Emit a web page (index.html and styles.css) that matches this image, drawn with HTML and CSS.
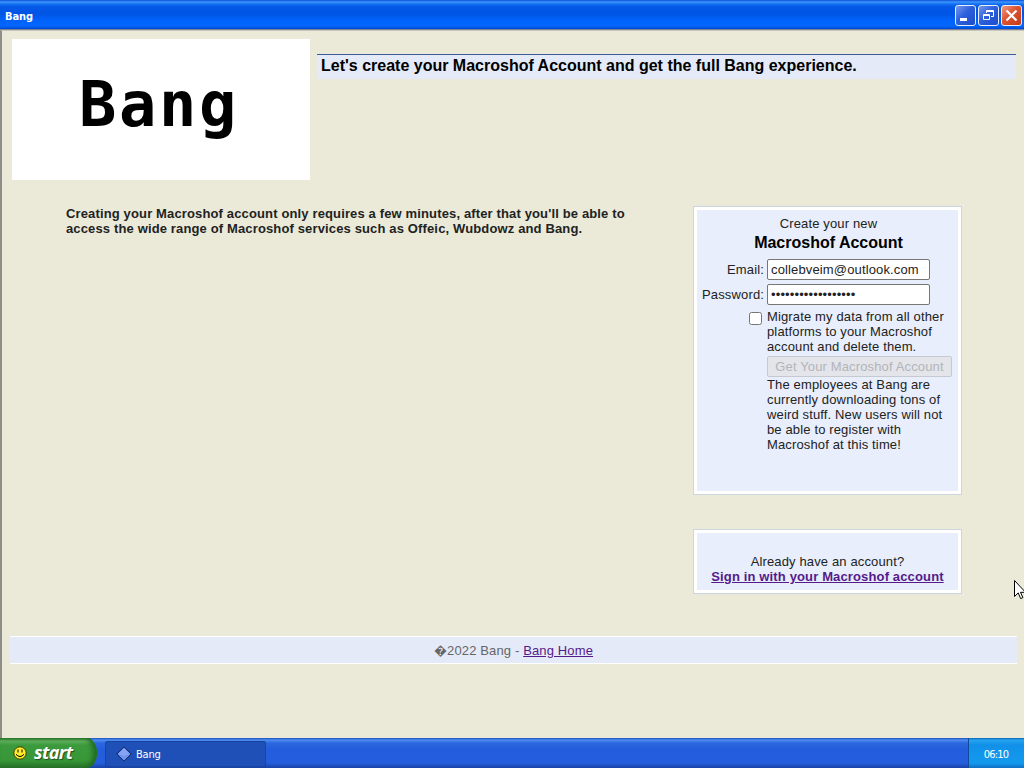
FILE: index.html
```
<!DOCTYPE html>
<html lang="en">
<head>
  <meta charset="UTF-8">
  <title>Bang</title>
  <link rel="stylesheet" href="styles.css">
</head>
<body>

<div class="titlebar">
  <span class="title">Bang</span>
  <div class="controls">
    <button class="control" aria-label="Minimize">
      <svg width="19" height="19" viewBox="0 0 19 19"><rect x="4" y="12" width="7" height="3" fill="#fff"/></svg>
    </button>
    <button class="control" aria-label="Restore">
      <svg width="19" height="19" viewBox="0 0 19 19" fill="none" stroke="#fff"><path d="M7.5 7V4.5h7v6H12M7 5.5h8"/><path d="M4.5 8.5h6v5h-6zM4 9.5h7"/></svg>
    </button>
    <button class="control close" aria-label="Close">
      <svg width="19" height="19" viewBox="0 0 19 19"><path d="M4.5 4.5l10 10M14.5 4.5l-10 10" stroke="#fff" stroke-width="2.2"/></svg>
    </button>
  </div>
</div>

<div class="page">
  <div class="top">
    <div class="logo">Bang</div>
    <h1>Let's create your Macroshof Account and get the full Bang experience.</h1>
  </div>

  <div class="main">
    <p class="intro">Creating your Macroshof account only requires a few minutes, after that you'll be able to<br>access the wide range of Macroshof services such as Offeic, Wubdowz and Bang.</p>

    <div class="side">
      <form class="box signup">
        <div class="box-title">Create your new<strong>Macroshof Account</strong></div>
        <div class="fields">
          <label for="email">Email:</label>
          <input type="text" id="email" value="collebveim@outlook.com">
          <label for="password">Password:</label>
          <input type="password" id="password" value="macroshofaccount22">
          <input type="checkbox" id="migrate">
          <label class="migrate" for="migrate">Migrate my data from all other platforms to your Macroshof account and delete them.</label>
          <div class="submit">
            <button type="button" disabled>Get Your Macroshof Account</button>
            <p>The employees at Bang are currently downloading tons of weird stuff. New users will not be able to register with Macroshof at this time!</p>
          </div>
        </div>
      </form>

      <div class="box signin">
        Already have an account?<br>
        <a href="#">Sign in with your Macroshof account</a>
      </div>
    </div>
  </div>

  <div class="footer">&#xFFFD;2022 Bang - <a href="#">Bang Home</a></div>
</div>

<div class="taskbar">
  <button class="start">
    <svg width="14" height="14" viewBox="0 0 14 14"><circle cx="7" cy="7" r="6.2" fill="#ffed2b" stroke="#3b3a00"/><path d="M4.5 3.5h1v3h-1zM8.5 3.5h1v3h-1z"/><path d="M3 8.3q4 4.5 8 0" fill="none" stroke="#000"/></svg>
    <span>start</span>
  </button>
  <div class="task">
    <svg width="16" height="16" viewBox="0 0 16 16"><path d="M8 .8L15.2 8 8 15.2.8 8z" fill="#7094ef" stroke="#0b2057"/><path d="M8 2.5L13.5 8 8 10 2.5 8z" fill="#92aff7" opacity=".6"/></svg>
    <span>Bang</span>
  </div>
  <div class="clock">06:10</div>
</div>

<svg class="cursor" width="12" height="21" viewBox="0 0 12 21"><path d="M.5.5v16l3.7-3.6 2.5 5.7 2.2-1-2.4-5.3h5z" fill="#fff" stroke="#000"/></svg>

</body>
</html>
```
FILE: styles.css
```
* {
  box-sizing: border-box;
}

body {
  margin: 0;
  width: 1024px;
  height: 768px;
  display: flex;
  flex-direction: column;
  overflow: hidden;
  font: 13px/15px "Liberation Sans", Arial, sans-serif;
  letter-spacing: 0.14px;
  color: #222;
  background: #ebead9;
}

p, h1 {
  margin: 0;
}

button, input {
  font: inherit;
  letter-spacing: inherit;
  margin: 0;
}

a {
  color: #551a8b;
}

/* window frame */
.titlebar {
  height: 30px;
  padding: 1px 2px 0 5px;
  display: flex;
  align-items: center;
  justify-content: space-between;
  background: linear-gradient(#0a50d8 0, #3f96fc 2px, #1470f2 4px, #0358e8 7px, #0055e5 14px, #0062fb 20px, #0066ff 26px, #0049cf 29px, #7b8299 29px);
}

.title {
  padding-top: 1px;
  font: bold 11px "DejaVu Sans Condensed", "DejaVu Sans", sans-serif;
  letter-spacing: -0.1px;
  color: #fff;
}

.controls {
  display: flex;
  gap: 2px;
}

.control {
  width: 21px;
  height: 21px;
  padding: 0;
  border: 1px solid #e8effc;
  border-radius: 3px;
  background: linear-gradient(135deg, #7799ee, #2c60dc 45%, #1e4cc8);
}

.control svg {
  display: block;
}

.close {
  background: linear-gradient(135deg, #ee9a83, #dc5331 45%, #c63a18);
}

.page {
  height: 708px;
  padding: 8px 7px 0 8px;
  border-left: 2px solid #8e8d89;
  border-top: 1px solid #c9c7bb;
}

.top {
  height: 167px;
  padding: 0 1px 0 2px;
  display: flex;
  gap: 7px;
}

.logo {
  width: 298px;
  height: 141px;
  padding-left: 67px;
  background: #fff;
  color: #000;
  font: bold 62px/131px "DejaVu Sans Mono", monospace;
  letter-spacing: 2.7px;
}

h1 {
  flex: 1;
  height: 25px;
  margin-top: 15px;
  padding-left: 4px;
  border-top: 1px solid #3c5c9c;
  background: #e5eaf8;
  color: #000;
  font-size: 16px;
  line-height: 22px;
  letter-spacing: 0;
}

.main {
  height: 430px;
  padding: 0 55px 0 56px;
  display: flex;
  justify-content: space-between;
}

.intro {
  font-weight: bold;
}

.side {
  width: 269px;
  display: flex;
  flex-direction: column;
  gap: 34px;
}

/* panels */
.box {
  border: 1px solid #ccd4e4;
  background: #e8eefb;
  box-shadow: inset 0 0 0 3px #fff;
}

.signup {
  height: 289px;
  padding: 9px 8px 0;
}

.box-title {
  height: 43px;
  padding-left: 2px;
  text-align: center;
}

.box-title strong {
  display: block;
  color: #000;
  font-size: 16px;
  line-height: 23px;
  letter-spacing: 0;
}

.fields {
  display: grid;
  grid-template-columns: 62px 186px;
  column-gap: 3px;
  justify-items: end;
}

.fields label {
  line-height: 21px;
}

.fields input[type="text"],
.fields input[type="password"] {
  justify-self: start;
  width: 163px;
  height: 21px;
  margin-bottom: 4px;
  padding: 1px 3px;
  border: 1px solid #767676;
  border-radius: 2px;
  background: #fff;
  color: #222;
}

.fields input[type="checkbox"] {
  width: 13px;
  height: 13px;
  margin: 3px 2px 0 0;
}

.fields .migrate {
  width: 186px;
  line-height: 15px;
}

.submit {
  grid-column: 2;
  width: 186px;
}

.submit button {
  width: 185px;
  height: 21px;
  margin-top: 2px;
  padding: 0;
  border: 1px solid #c6c9d0;
  border-radius: 2px;
  background: #e3e5ea;
  color: #b2b4b9;
}

.signin {
  height: 65px;
  padding-top: 24px;
  text-align: center;
}

.signin a {
  font-weight: bold;
}

.footer {
  height: 28px;
  border: 1px solid #fff;
  border-width: 1px 0;
  background: #e5eaf8;
  color: #666;
  line-height: 27px;
  text-align: center;
}

.taskbar {
  height: 30px;
  display: flex;
  background: linear-gradient(#2050b8 0, #4b8cf2 2px, #2c68de 5px, #235cdc 12px, #245edd 25px, #1941a5);
  color: #fff;
  font: 11px "DejaVu Sans Condensed", "DejaVu Sans", sans-serif;
}

.start {
  width: 97px;
  padding: 0 0 0 13px;
  display: flex;
  align-items: center;
  gap: 7px;
  border: 0;
  border-radius: 0 10px 10px 0 / 0 15px 15px 0;
  background: linear-gradient(#2f7a32 0, #62b35f 3px, #3c9a3c 7px, #379737 22px, #27752a);
  box-shadow: inset -4px 0 5px #216b24;
  color: #fff;
  font: italic bold 18px "Open Sans", sans-serif;
  letter-spacing: -0.6px;
  text-shadow: 1px 1px 1px #24501c;
}

.start span {
  margin-top: -2px;
}

.task {
  width: 161px;
  height: 26px;
  margin: 3px 0 0 8px;
  padding-left: 10px;
  display: flex;
  align-items: center;
  gap: 4px;
  border: 1px solid #1a459f;
  border-radius: 2px;
  background: #1e50b7;
  letter-spacing: -0.2px;
}

.clock {
  width: 56px;
  margin-left: auto;
  padding: 4px 1px 0 0;
  border-left: 1px solid #104a9b;
  background: linear-gradient(#0e66b8 0, #24a5f0 2px, #1290e9 7px, #129aee 25px, #0f6fc4);
  line-height: 26px;
  letter-spacing: -0.8px;
  text-align: center;
}

.cursor {
  position: absolute;
  left: 1014px;
  top: 580px;
}
```
